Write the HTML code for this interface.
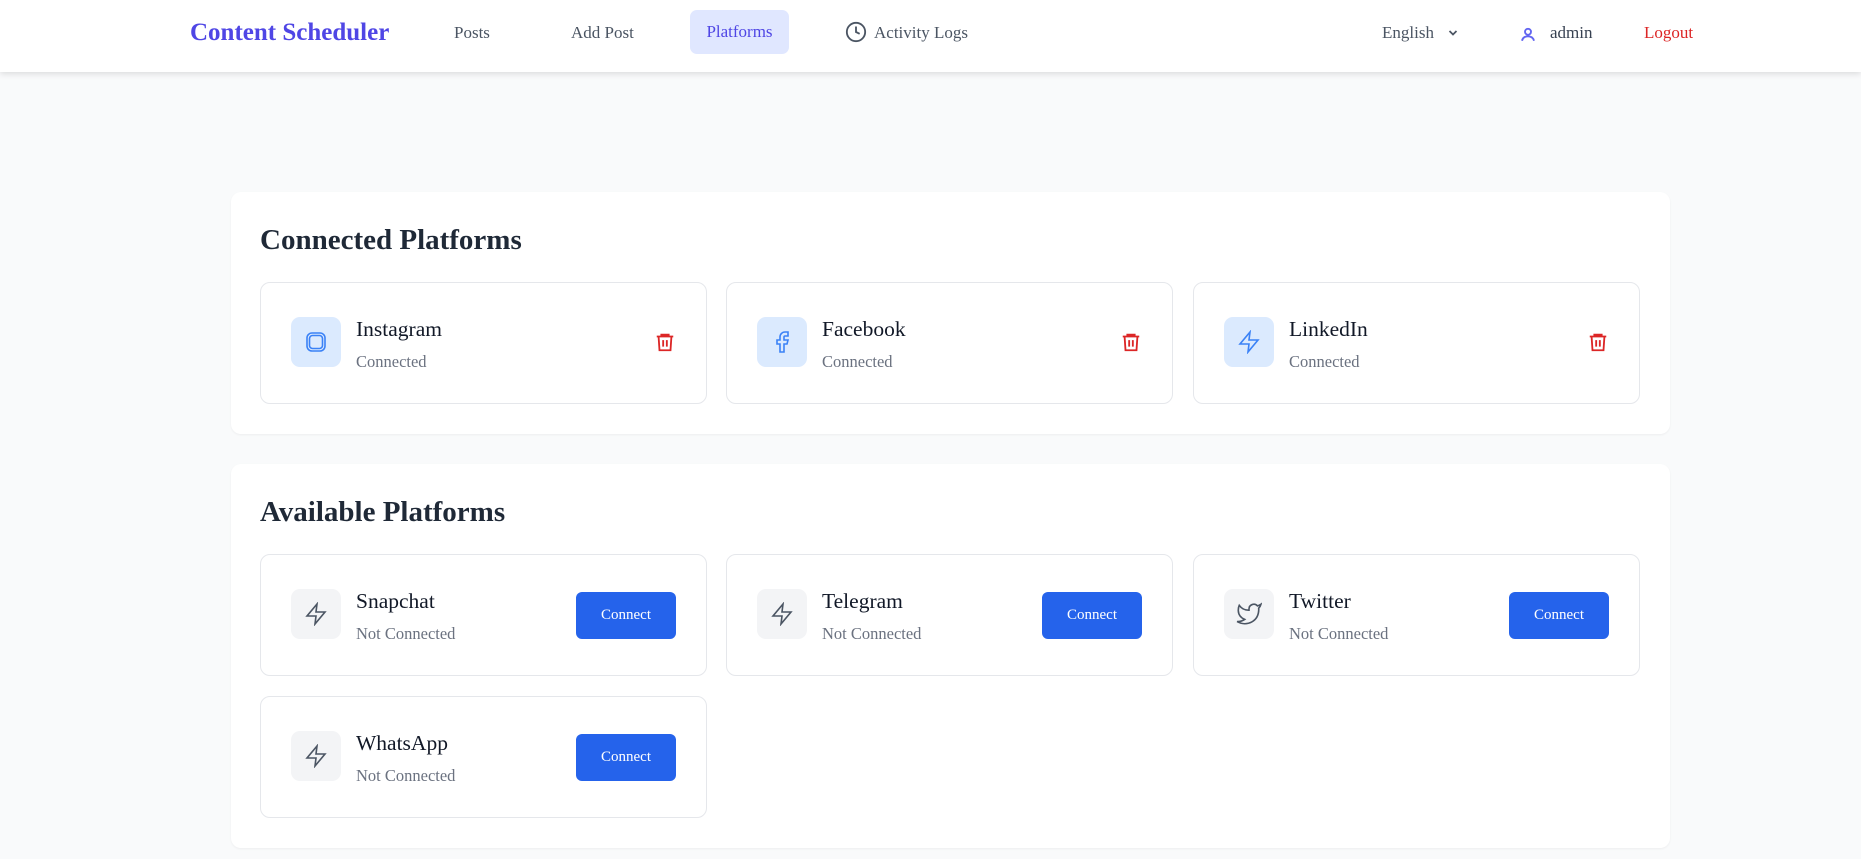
<!DOCTYPE html>
<html><head><style>
*{box-sizing:border-box;margin:0;padding:0}
body{width:1861px;height:859px;background:#f9fafb;font-family:"Liberation Serif",serif;position:relative;overflow:hidden}
.hdr{position:absolute;left:0;top:0;width:1861px;height:72px;background:#fff;box-shadow:0 2px 6px rgba(0,0,0,.12)}
.a{position:absolute;top:0;height:72px;line-height:66px;font-size:17px;color:#4b5563}
.sec{position:absolute;left:231px;width:1439px;background:#fff;border-radius:10px;box-shadow:0 1px 2px rgba(0,0,0,.05)}
.sec h2{position:absolute;left:29px;font-size:29px;font-weight:bold;color:#1f2937}
.card{position:absolute;width:447px;height:122px;border:1.5px solid #e5e7eb;border-radius:10px;background:#fff}
.ic{position:absolute;left:30px;top:34px;width:50px;height:50px;border-radius:9px;display:flex;align-items:center;justify-content:center}
.nm{position:absolute;left:95px;top:34px;font-size:21.5px;color:#111827}
.st{position:absolute;left:95px;top:69px;font-size:16.5px;color:#6b7280}
.tr{position:absolute;left:393px;top:48px}
.btn{position:absolute;left:315px;top:37px;width:100px;height:47px;background:#2563eb;color:#fff;border-radius:6px;font-size:15px;text-align:center;line-height:47px}
</style></head><body>
<div class="hdr">
<div class="a" style="left:190px;font-size:25px;font-weight:bold;color:#4f46e5">Content Scheduler</div>
<div class="a" style="left:454px">Posts</div>
<div class="a" style="left:571px">Add Post</div>
<div style="position:absolute;left:690px;top:10px;width:99px;height:44px;background:#e0e7ff;border-radius:7px;color:#4f46e5;font-size:17px;text-align:center;line-height:44px">Platforms</div>
<svg style="position:absolute;left:845px;top:21px" width="22" height="22" viewBox="0 0 24 24" fill="none" stroke="#4b5563" stroke-width="2"><circle cx="12" cy="12" r="10"/><path d="M12 6v6l4 2"/></svg>
<div class="a" style="left:874px">Activity Logs</div>
<div class="a" style="left:1382px">English</div>
<svg style="position:absolute;left:1447px;top:27px" width="12" height="12" viewBox="0 0 24 24" fill="none" stroke="#4b5563" stroke-width="3.5"><path d="M5 8l7 7 7-7"/></svg>
<svg style="position:absolute;left:1519px;top:25px" width="18" height="18" viewBox="0 0 24 24" fill="none" stroke="#6366f1" stroke-width="2.5"><circle cx="12" cy="9" r="4"/><path d="M4 21c1-4 4-6 8-6s7 2 8 6"/></svg>
<div class="a" style="left:1550px;color:#374151">admin</div>
<div class="a" style="left:1644px;color:#dc2626">Logout</div>
</div>

<div class="sec" style="top:192px;height:242px">
<h2 style="top:32px">Connected Platforms</h2>
</div>
<div class="sec" style="top:464px;height:384px">
<h2 style="top:32px">Available Platforms</h2>
</div>

<div class="card" style="left:260px;top:282px"><div class="ic" style="background:#dbeafe"><svg width="24" height="24" viewBox="0 0 24 24" fill="none" stroke="#3b82f6" stroke-width="1.6"><rect x="3" y="3" width="18" height="18" rx="5"/><rect x="5.5" y="5.5" width="13" height="13" rx="3"/></svg></div><div class="nm">Instagram</div><div class="st">Connected</div><svg class="tr" width="22" height="22" viewBox="0 0 24 24" fill="none" stroke="#dc2626" stroke-width="2"><path d="M3 6h18M8 6V4h8v2M5 6l1 15h12l1-15M10 10v7M14 10v7"/></svg></div>
<div class="card" style="left:726px;top:282px"><div class="ic" style="background:#dbeafe"><svg width="24" height="24" viewBox="0 0 24 24" fill="none" stroke="#3b82f6" stroke-width="1.6"><path d="M18 2h-3a5 5 0 0 0-5 5v3H7v4h3v8h4v-8h3l1-4h-4V7a1 1 0 0 1 1-1h3z"/></svg></div><div class="nm">Facebook</div><div class="st">Connected</div><svg class="tr" width="22" height="22" viewBox="0 0 24 24" fill="none" stroke="#dc2626" stroke-width="2"><path d="M3 6h18M8 6V4h8v2M5 6l1 15h12l1-15M10 10v7M14 10v7"/></svg></div>
<div class="card" style="left:1193px;top:282px"><div class="ic" style="background:#dbeafe"><svg width="24" height="24" viewBox="0 0 24 24" fill="none" stroke="#3b82f6" stroke-width="1.6"><path d="M13 2L3 14h9l-1 8 10-12h-9l1-8z"/></svg></div><div class="nm">LinkedIn</div><div class="st">Connected</div><svg class="tr" width="22" height="22" viewBox="0 0 24 24" fill="none" stroke="#dc2626" stroke-width="2"><path d="M3 6h18M8 6V4h8v2M5 6l1 15h12l1-15M10 10v7M14 10v7"/></svg></div>

<div class="card" style="left:260px;top:554px"><div class="ic" style="background:#f3f4f6"><svg width="24" height="24" viewBox="0 0 24 24" fill="none" stroke="#4b5563" stroke-width="1.6"><path d="M13 2L3 14h9l-1 8 10-12h-9l1-8z"/></svg></div><div class="nm">Snapchat</div><div class="st">Not Connected</div><div class="btn">Connect</div></div>
<div class="card" style="left:726px;top:554px"><div class="ic" style="background:#f3f4f6"><svg width="24" height="24" viewBox="0 0 24 24" fill="none" stroke="#4b5563" stroke-width="1.6"><path d="M13 2L3 14h9l-1 8 10-12h-9l1-8z"/></svg></div><div class="nm">Telegram</div><div class="st">Not Connected</div><div class="btn">Connect</div></div>
<div class="card" style="left:1193px;top:554px"><div class="ic" style="background:#f3f4f6"><svg width="26" height="26" viewBox="0 0 24 24" fill="none" stroke="#4b5563" stroke-width="1.5"><path d="M23 3a10.9 10.9 0 0 1-3.14 1.53 4.48 4.48 0 0 0-7.86 3v1A10.66 10.66 0 0 1 3 4s-4 9 5 13a11.64 11.64 0 0 1-7 2c9 5 20 0 20-11.5a4.5 4.5 0 0 0-.08-.83A7.720 7.720 0 0 0 23 3z"/></svg></div><div class="nm">Twitter</div><div class="st">Not Connected</div><div class="btn">Connect</div></div>
<div class="card" style="left:260px;top:696px"><div class="ic" style="background:#f3f4f6"><svg width="24" height="24" viewBox="0 0 24 24" fill="none" stroke="#4b5563" stroke-width="1.6"><path d="M13 2L3 14h9l-1 8 10-12h-9l1-8z"/></svg></div><div class="nm">WhatsApp</div><div class="st">Not Connected</div><div class="btn">Connect</div></div>
</body></html>
